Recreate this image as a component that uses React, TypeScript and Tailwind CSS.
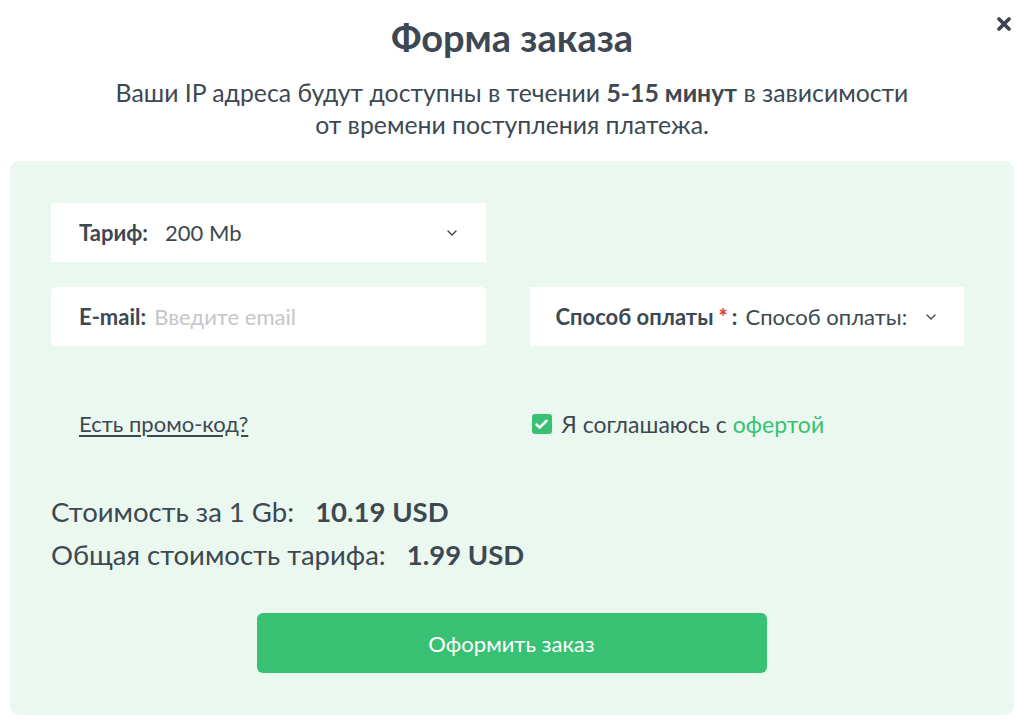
import { Check, ChevronDown, X } from 'lucide-react'

export default function App() {
    return (
        <div className="relative w-[1024px] h-[720px] bg-white text-[#3d4852] font-['Lato',sans-serif] overflow-hidden">
            {/* Close */}
            <button className="absolute top-[14px] right-[10px] w-[20px] h-[20px] flex items-center justify-center text-[#3d4852]">
                <X className="w-[20px] h-[20px]" strokeWidth={4.5} />
            </button>

            {/* Header */}
            <h1 className="pt-[12px] text-center text-[38px] leading-[50px] font-bold">Форма заказа</h1>
            <p className="mt-[15px] text-center text-[24.8px] leading-[32px]">
                Ваши IP адреса будут доступны в течении <b className="font-bold">5-15 минут</b> в зависимости
                <br />
                от времени поступления платежа.
            </p>

            {/* Panel */}
            <div className="mx-[10px] mt-[20px] h-[554px] rounded-[10px] bg-[#ebf8f0] pt-[42px] pl-[41px] pr-[50px]">
                <div className="grid grid-cols-2 gap-x-[44px] gap-y-[25px]">
                    <div className="h-[59px] bg-white flex items-center pl-[28px] pr-[26px] text-[22px]">
                        <span className="font-bold">Тариф:</span>
                        <span className="ml-[17px]">200 Mb</span>
                        <ChevronDown className="ml-auto w-[16px] h-[16px]" strokeWidth={2} />
                    </div>
                    <div />
                    <div className="h-[59px] bg-white rounded-[5px] flex items-center pl-[28px] text-[22px]">
                        <span className="font-bold">E-mail:</span>
                        <span className="ml-[8px] text-[#c4c6c8]">Введите email</span>
                    </div>
                    <div className="h-[59px] bg-white flex items-center pl-[26px] text-[22px]">
                        <span className="font-bold">Способ оплаты</span>
                        <span className="ml-[5px] text-[#e3342f] font-bold">*</span>
                        <span className="ml-[4px] font-bold">:</span>
                        <span className="ml-[8px]">Способ оплаты:</span>
                        <ChevronDown className="ml-[16px] w-[16px] h-[16px]" strokeWidth={2} />
                    </div>
                </div>

                <div className="grid grid-cols-2 gap-x-[44px] mt-[63px]">
                    <div className="pl-[28px] text-[22px] leading-[30px]">
                        <a className="underline underline-offset-[3px]">Есть промо-код?</a>
                    </div>
                    <div className="flex items-center pl-[2px] text-[23px] leading-[30px]">
                        <span className="w-[20px] h-[20px] rounded-[3px] bg-[#38c172] flex items-center justify-center">
                            <Check className="w-[15px] h-[15px] text-white" strokeWidth={4} />
                        </span>
                        <span className="ml-[10px]">Я соглашаюсь с</span>
                        <span className="ml-[6px] text-[#38c172]">офертой</span>
                    </div>
                </div>

                <div className="mt-[51px] text-[27.5px] leading-[43px]">
                    <div>
                        Стоимость за 1 Gb: <span className="ml-[14px] font-bold">10.19 USD</span>
                    </div>
                    <div>
                        Общая стоимость тарифа: <span className="ml-[14px] font-bold">1.99 USD</span>
                    </div>
                </div>

                <div className="mt-[37px] flex justify-center">
                    <button className="w-[510px] h-[60px] rounded-[6px] bg-[#38c172] text-white text-[22px] ml-[8px]">
                        Оформить заказ
                    </button>
                </div>
            </div>
        </div>
    )
}
